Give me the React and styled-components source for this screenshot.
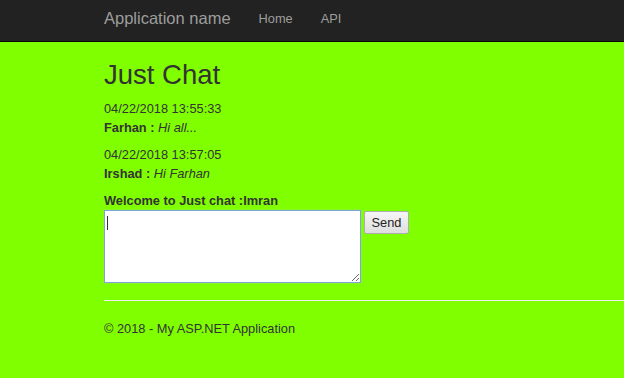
import React from "react";
import styled, { createGlobalStyle } from "styled-components";

const GlobalStyle = createGlobalStyle`
  html, body {
    margin: 0;
    padding: 0;
    background: #80ff00;
  }
  body {
    font-family: "Liberation Sans", Arial, Helvetica, sans-serif;
    font-size: 12.8px;
    line-height: 19px;
    color: #333;
  }
`;

const Page = styled.div`
  min-height: 378px;
  background: #80ff00;
  overflow: hidden;
`;

const Navbar = styled.nav`
  height: 41px;
  background: #222;
  border-bottom: 1px solid #080808;
  display: flex;
  align-items: center;
  padding-left: 104px;
`;

const Brand = styled.a`
  font-size: 16.5px;
  color: #9d9d9d;
  text-decoration: none;
  margin-top: -5px;
  margin-right: 28px;
`;

const NavLink = styled.a`
  font-size: 12.8px;
  color: #9d9d9d;
  text-decoration: none;
  margin-top: -5px;
  margin-right: 28px;
`;

const Body = styled.main`
  padding-left: 104px;
`;

const Title = styled.h2`
  font-size: 27.5px;
  font-weight: 500;
  line-height: 30.25px;
  margin: 18px 0 8.5px;
  color: #333;
`;

const Message = styled.div`
  margin-bottom: 8px;
`;

const Author = styled.strong`
  font-weight: bold;
`;

const Text = styled.em`
  font-style: italic;
`;

const Label = styled.div`
  font-weight: bold;
`;

const Form = styled.div`
  display: flex;
  align-items: flex-start;
  gap: 3px;
`;

const Field = styled.div`
  position: relative;
`;

const TextArea = styled.textarea`
  display: block;
  box-sizing: border-box;
  width: 257px;
  height: 73px;
  margin: 0;
  border: 1px solid #7ea5d6;
  box-shadow: 0 0 1px #a9c6ea;
  background: #fff;
  font-family: "Liberation Sans", Arial, sans-serif;
  font-size: 12.8px;
  padding: 2px 3px;
  outline: none;
`;

const Caret = styled.span`
  position: absolute;
  left: 3px;
  top: 6px;
  width: 1px;
  height: 14px;
  background: #333;
`;

const SendButton = styled.button`
  box-sizing: border-box;
  margin-top: 1px;
  width: 45px;
  height: 23px;
  padding: 0;
  font-family: "Liberation Sans", Arial, sans-serif;
  font-size: 12.8px;
  color: #222;
  background: linear-gradient(#f6f6f6, #dedede);
  border: 1px solid #adadad;
  border-radius: 2px;
`;

const Rule = styled.hr`
  border: 0;
  border-top: 1px solid #eee;
  margin: 17px 0 18px;
`;

const Footer = styled.footer`
  color: #333;
  line-height: 20px;
`;

const messages = [
  { time: "04/22/2018 13:55:33", user: "Farhan", text: "Hi all..." },
  { time: "04/22/2018 13:57:05", user: "Irshad", text: "Hi Farhan" },
];

const App = () => {
  return (
    <Page>
      <GlobalStyle />
      <Navbar>
        <Brand href="#">Application name</Brand>
        <NavLink href="#">Home</NavLink>
        <NavLink href="#">API</NavLink>
      </Navbar>
      <Body>
        <Title>Just Chat</Title>
        {messages.map((m) => (
          <Message key={m.time}>
            <div>{m.time}</div>
            <div>
              <Author>{m.user} :</Author> <Text>{m.text}</Text>
            </div>
          </Message>
        ))}
        <Label>Welcome to Just chat :Imran</Label>
        <Form>
          <Field>
            <TextArea />
            <Caret />
          </Field>
          <SendButton>Send</SendButton>
        </Form>
        <Rule />
        <Footer>© 2018 - My ASP.NET Application</Footer>
      </Body>
    </Page>
  );
};

export default App;
